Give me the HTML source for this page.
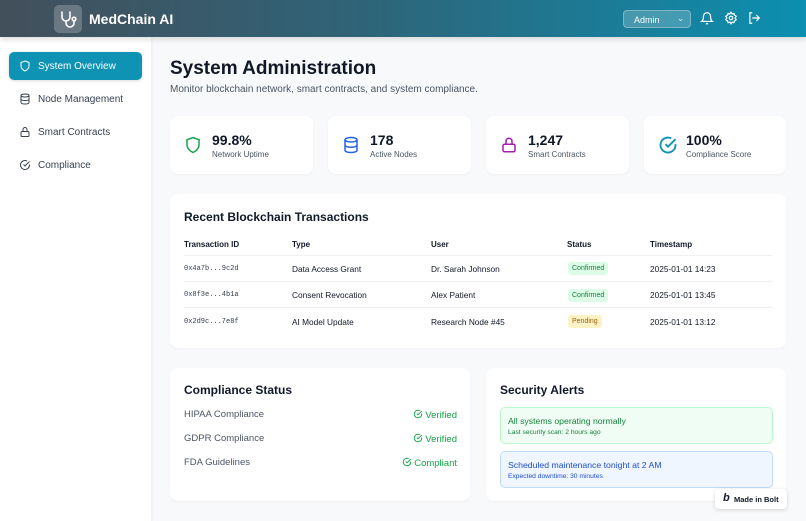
<!DOCTYPE html>
<html><head><meta charset="utf-8"><style>
*{box-sizing:border-box;margin:0;padding:0}
body{width:806px;height:521px;overflow:hidden;font-family:"Liberation Sans",sans-serif;background:#f8f9fb;color:#111827;position:relative}
.hdr{position:absolute;left:0;top:0;width:806px;height:37px;background:linear-gradient(90deg,#434f5b 0%,#2f6478 45%,#0c8fb0 100%);box-shadow:0 2px 6px rgba(0,0,0,.15);z-index:2}
.logo{position:absolute;left:54px;top:5px;width:28px;height:28px;border-radius:5px;background:rgba(255,255,255,.22)}
.brand{position:absolute;left:89px;top:11px;color:#fff;font-weight:bold;font-size:14px}
.sel{position:absolute;left:623px;top:10px;width:68px;height:18px;border-radius:4px;background:rgba(255,255,255,.2);border:1px solid rgba(255,255,255,.3);color:#fff;font-size:9px;padding:4px 0 0 10px}
.side{position:absolute;left:0;top:37px;width:151px;height:484px;background:#fff;box-shadow:1px 0 3px rgba(0,0,0,.05)}
.nav{position:absolute;left:9px;width:133px;height:28px;border-radius:5px;font-size:10px;color:#374151;padding:9px 0 0 29px}
.nav svg{position:absolute;left:10px;top:8px}
.nav.act{background:#0e93b4;color:#fff;box-shadow:0 1px 3px rgba(0,0,0,.15)}
.card{position:absolute;background:#fff;border-radius:8px;box-shadow:0 1px 2px rgba(0,0,0,.04)}
h1{position:absolute;left:170px;top:58px;font-size:19px;font-weight:bold}
.sub{position:absolute;left:170px;top:84px;font-size:10px;color:#4b5563}
.stat svg{position:absolute;left:14px;top:19px}
.stat b{position:absolute;left:42px;top:16px;font-size:14px}
.stat span{position:absolute;left:42px;top:34px;font-size:8px;color:#4b5563}
h2{position:absolute;font-size:12px;font-weight:bold}
.t{position:absolute;font-size:8.3px;color:#111827}
.th{font-weight:bold;font-size:8px}
.mono{font-family:"Liberation Mono",monospace;font-size:7px;color:#374151}
.line{position:absolute;left:184px;width:588px;height:1px;background:#eef0f3}
.badge{position:absolute;font-size:7px;padding:3px 4px;border-radius:3px}
.ok{background:#dcfce7;color:#15803d}.pend{background:#fef3c7;color:#a16207}
.cl{position:absolute;left:184px;font-size:9.5px;color:#4b5563}
.cr{position:absolute;right:349px;font-size:9.5px;color:#16a34a}
.cr svg{vertical-align:-1px;margin-right:2px}
.al{position:absolute;left:500px;width:273px;height:37px;border-radius:5px;padding:8px 0 0 7px;font-size:8.7px}
.al small{display:block;font-size:6.7px;margin-top:3px}
</style></head><body>
<div class="hdr">
 <div class="logo"><svg width="28" height="28" viewBox="0 0 28 28" fill="none" stroke="#fff" stroke-width="1.6" stroke-linecap="round"><path d="M8 7v5a4 4 0 0 0 8 0V7M12 16v2a4 4 0 0 0 8 0v-2"/><circle cx="20" cy="14" r="1.8"/></svg></div>
 <div class="brand">MedChain AI</div>
 <div class="sel">Admin<span style="position:absolute;right:6px;top:3px;font-size:8px">⌄</span></div>
 <svg style="position:absolute;left:700px;top:11px" width="14" height="15" viewBox="0 0 24 24" fill="none" stroke="#fff" stroke-width="2"><path d="M6 8a6 6 0 0 1 12 0c0 7 3 9 3 9H3s3-2 3-9M10 21h4"/></svg>
 <svg style="position:absolute;left:724px;top:11px" width="14" height="14" viewBox="0 0 24 24" fill="none" stroke="#fff" stroke-width="2"><circle cx="12" cy="12" r="3"/><path d="M12 2l2 3 3-1 1 3 3 2-2 3 2 3-3 2-1 3-3-1-2 3-2-3-3 1-1-3-3-2 2-3-2-3 3-2 1-3 3 1z"/></svg>
 <svg style="position:absolute;left:747px;top:11px" width="14" height="14" viewBox="0 0 24 24" fill="none" stroke="#fff" stroke-width="2"><path d="M9 21H5V3h4M16 17l5-5-5-5M21 12H9"/></svg>
</div>
<div class="side">
 <div class="nav act" style="top:15px"><svg width="12" height="12" viewBox="0 0 24 24" fill="none" stroke="#fff" stroke-width="2"><path d="M12 2l8 3v7c0 5-4 8-8 10-4-2-8-5-8-10V5z"/></svg>System Overview</div>
 <div class="nav" style="top:48px"><svg width="12" height="12" viewBox="0 0 24 24" fill="none" stroke="#374151" stroke-width="2"><ellipse cx="12" cy="5" rx="8" ry="3"/><path d="M4 5v14c0 2 4 3 8 3s8-1 8-3V5M4 12c0 2 4 3 8 3s8-1 8-3"/></svg>Node Management</div>
 <div class="nav" style="top:81px"><svg width="12" height="12" viewBox="0 0 24 24" fill="none" stroke="#374151" stroke-width="2"><rect x="4" y="11" width="16" height="10" rx="2"/><path d="M8 11V7a4 4 0 0 1 8 0v4"/></svg>Smart Contracts</div>
 <div class="nav" style="top:114px"><svg width="12" height="12" viewBox="0 0 24 24" fill="none" stroke="#374151" stroke-width="2"><path d="M21 11v1a9 9 0 1 1-5-8M9 11l3 3 9-9"/></svg>Compliance</div>
</div>
<h1>System Administration</h1>
<div class="sub">Monitor blockchain network, smart contracts, and system compliance.</div>
<div class="card stat" style="left:170px;top:116px;width:143px;height:58px"><svg width="18" height="20" viewBox="0 0 24 24" fill="none" stroke="#16a34a" stroke-width="2"><path d="M12 2l8 3v7c0 5-4 8-8 10-4-2-8-5-8-10V5z"/></svg><b>99.8%</b><span>Network Uptime</span></div>
<div class="card stat" style="left:328px;top:116px;width:143px;height:58px"><svg width="18" height="20" viewBox="0 0 24 24" fill="none" stroke="#2563eb" stroke-width="2"><ellipse cx="12" cy="5" rx="8" ry="3"/><path d="M4 5v14c0 2 4 3 8 3s8-1 8-3V5M4 12c0 2 4 3 8 3s8-1 8-3"/></svg><b>178</b><span>Active Nodes</span></div>
<div class="card stat" style="left:486px;top:116px;width:143px;height:58px"><svg width="18" height="20" viewBox="0 0 24 24" fill="none" stroke="#a21caf" stroke-width="2"><rect x="4" y="11" width="16" height="10" rx="2"/><path d="M8 11V7a4 4 0 0 1 8 0v4"/></svg><b>1,247</b><span>Smart Contracts</span></div>
<div class="card stat" style="left:644px;top:116px;width:142px;height:58px"><svg width="20" height="20" viewBox="0 0 24 24" fill="none" stroke="#0e93b4" stroke-width="2.2"><path d="M21 11v1a9 9 0 1 1-5-8M9 11l3 3 9-9"/></svg><b>100%</b><span>Compliance Score</span></div>

<div class="card" style="left:170px;top:194px;width:616px;height:154px"></div>
<h2 style="left:184px;top:210px">Recent Blockchain Transactions</h2>
<div class="t th" style="left:184px;top:240px">Transaction ID</div>
<div class="t th" style="left:292px;top:240px">Type</div>
<div class="t th" style="left:431px;top:240px">User</div>
<div class="t th" style="left:567px;top:240px">Status</div>
<div class="t th" style="left:650px;top:240px">Timestamp</div>
<div class="line" style="top:255px"></div>
<div class="t mono" style="left:184px;top:265px">0x4a7b...9c2d</div>
<div class="t" style="left:292px;top:264px">Data Access Grant</div>
<div class="t" style="left:431px;top:264px">Dr. Sarah Johnson</div>
<div class="badge ok" style="left:568px;top:262px">Confirmed</div>
<div class="t" style="left:650px;top:264px">2025-01-01 14:23</div>
<div class="line" style="top:281px"></div>
<div class="t mono" style="left:184px;top:291px">0x8f3e...4b1a</div>
<div class="t" style="left:292px;top:290px">Consent Revocation</div>
<div class="t" style="left:431px;top:290px">Alex Patient</div>
<div class="badge ok" style="left:568px;top:289px">Confirmed</div>
<div class="t" style="left:650px;top:290px">2025-01-01 13:45</div>
<div class="line" style="top:307px"></div>
<div class="t mono" style="left:184px;top:318px">0x2d9c...7e8f</div>
<div class="t" style="left:292px;top:317px">AI Model Update</div>
<div class="t" style="left:431px;top:317px">Research Node #45</div>
<div class="badge pend" style="left:568px;top:315px">Pending</div>
<div class="t" style="left:650px;top:317px">2025-01-01 13:12</div>

<div class="card" style="left:170px;top:368px;width:300px;height:133px"></div>
<h2 style="left:184px;top:383px">Compliance Status</h2>
<div class="cl" style="top:409px">HIPAA Compliance</div><div class="cr" style="top:409px"><svg width="10" height="10" viewBox="0 0 24 24" fill="none" stroke="#16a34a" stroke-width="2.4"><path d="M21 11v1a9 9 0 1 1-5-8M9 11l3 3 9-9"/></svg>Verified</div>
<div class="cl" style="top:433px">GDPR Compliance</div><div class="cr" style="top:433px"><svg width="10" height="10" viewBox="0 0 24 24" fill="none" stroke="#16a34a" stroke-width="2.4"><path d="M21 11v1a9 9 0 1 1-5-8M9 11l3 3 9-9"/></svg>Verified</div>
<div class="cl" style="top:457px">FDA Guidelines</div><div class="cr" style="top:457px"><svg width="10" height="10" viewBox="0 0 24 24" fill="none" stroke="#16a34a" stroke-width="2.4"><path d="M21 11v1a9 9 0 1 1-5-8M9 11l3 3 9-9"/></svg>Compliant</div>

<div class="card" style="left:486px;top:368px;width:300px;height:133px"></div>
<h2 style="left:500px;top:383px">Security Alerts</h2>
<div class="al" style="top:407px;background:#f0fdf4;border:1px solid #bbf7d0;color:#15803d">All systems operating normally<small>Last security scan: 2 hours ago</small></div>
<div class="al" style="top:451px;background:#eff6ff;border:1px solid #bfdbfe;color:#1d4ed8">Scheduled maintenance tonight at 2 AM<small>Expected downtime: 30 minutes</small></div>
<div style="position:absolute;left:715px;top:489px;width:72px;height:20px;background:#fff;border-radius:4px;box-shadow:0 1px 4px rgba(0,0,0,.15);font-size:7.5px;font-weight:bold;padding:6px 0 0 19px"><span style="position:absolute;left:8px;top:3px;font-size:11px;font-style:italic;font-weight:900">b</span>Made in Bolt</div>
</body></html>
